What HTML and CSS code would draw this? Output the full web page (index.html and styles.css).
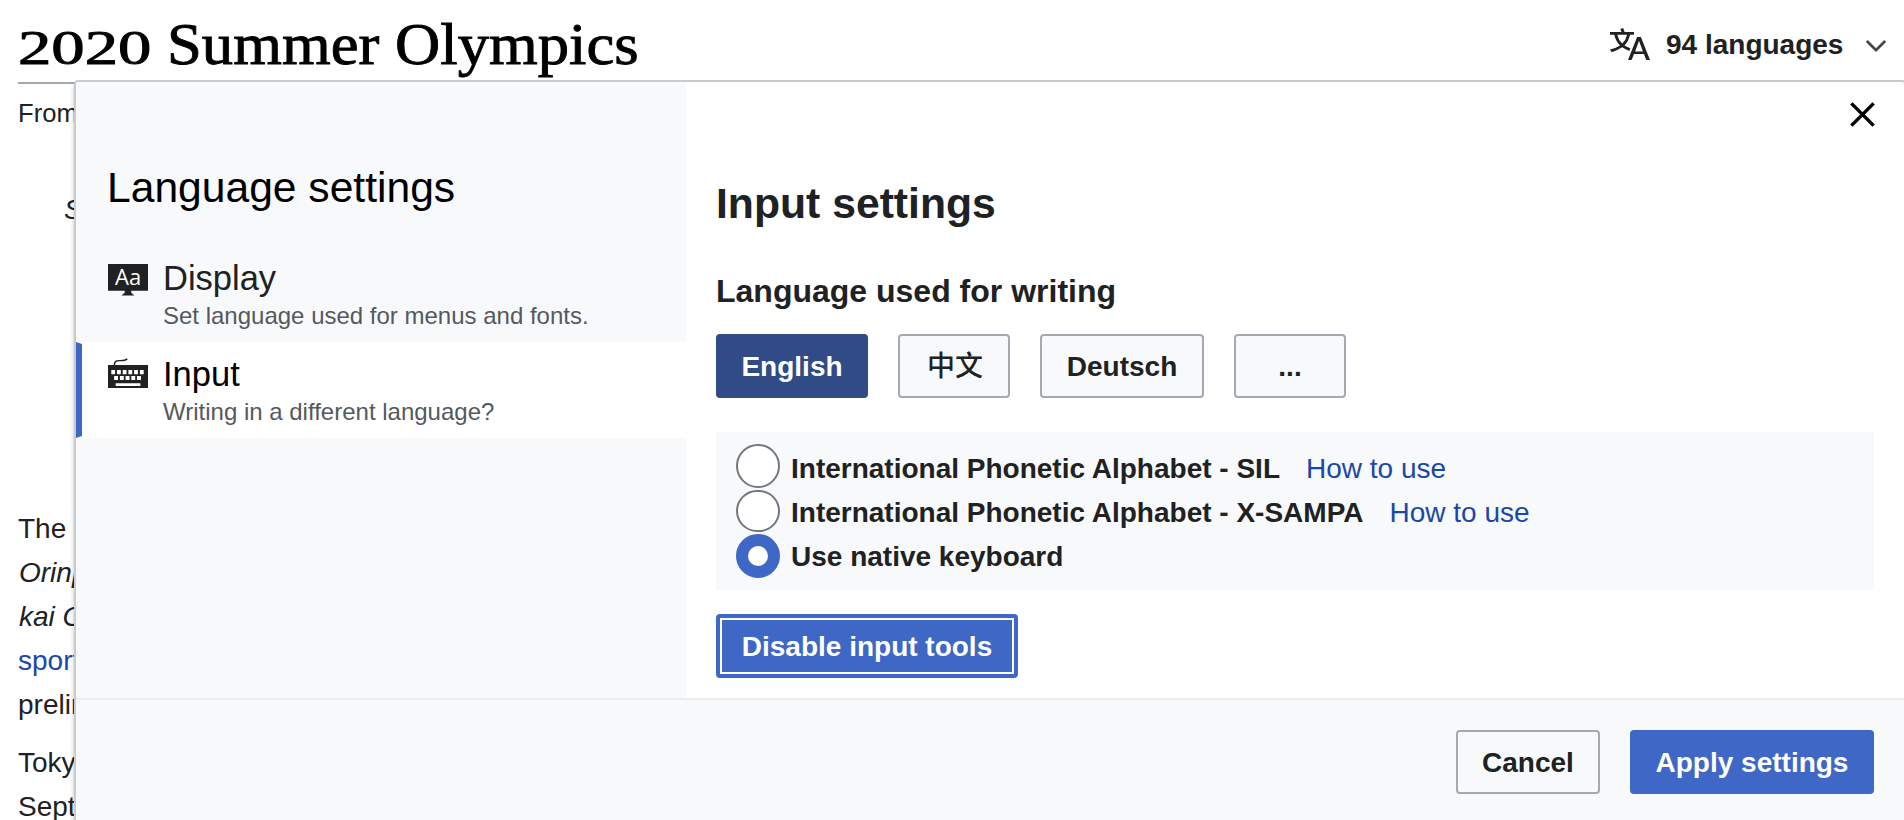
FILE: index.html
```html
<!DOCTYPE html>
<html lang="en">
<head>
<meta charset="utf-8">
<title>2020 Summer Olympics</title>
<link rel="stylesheet" href="styles.css">
</head>
<body>
<header class="page-header">
  <h1 class="page-title"><span class="title-year">2020</span><span class="title-name">Summer Olympics</span></h1>
  <div class="lang-button">
    <svg class="lang-icon" viewBox="0 0 20 20"><path d="M20 18h-1.44a.6.6 0 0 1-.4-.12.8.8 0 0 1-.23-.31L17 15h-5l-1 2.54a.8.8 0 0 1-.22.3.6.6 0 0 1-.4.14H9l4.55-11.47h1.89zm-3.53-4.31L14.89 9.5a12 12 0 0 1-.39-1.24q-.09.37-.19.69l-.19.56-1.58 4.19zm-6.3-1.58a13.4 13.4 0 0 1-2.91-1.41 11.46 11.46 0 0 0 2.81-5.37H12V4H7.31a4 4 0 0 0-.2-.56C6.87 2.79 6.6 2 6.6 2l-1.47.5s.4.89.6 1.5H0v1.33h2.15A11.23 11.23 0 0 0 5 10.7a17.2 17.2 0 0 1-5 2.1q.56.82.87 1.38a23.3 23.3 0 0 0 5.22-2.51 15.6 15.6 0 0 0 3.56 1.77zM3.63 5.33h4.91a8.1 8.1 0 0 1-2.45 4.45 9.1 9.1 0 0 1-2.46-4.45"/></svg>
    <span class="lang-label">94 languages</span>
    <svg class="lang-chevron" viewBox="0 0 20 20"><path d="m17.5 4.75-7.5 7.5-7.5-7.5L1 6.25l9 9 9-9z"/></svg>
  </div>
</header>

<article class="article">
  <div class="tagline">From</div>
  <div class="hatnote">S</div>
  <p class="para lead">The<br><i>Orinp</i><br><i>kai O</i><br><a class="link">sport</a><br>prelim</p>
  <p class="para">Toky<br>Sept</p>
</article>

<section class="dialog">
  <div class="dialog-main">
    <nav class="sidebar">
      <h2 class="sidebar-title">Language settings</h2>
      <div class="menu-item">
        <svg class="menu-icon" viewBox="0 0 40 40">
          <path class="ink" d="M0 6h40v26.700H23.200v2.100l3.200 2.700H13.400l3.300-2.700v-2.100H0z"/>
          <text class="icon-text" x="7" y="26.700">Aa</text>
        </svg>
        <div>
          <div class="menu-name">Display</div>
          <div class="menu-desc">Set language used for menus and fonts.</div>
        </div>
      </div>
      <div class="menu-item active">
        <svg class="menu-icon" viewBox="0 0 40 40">
          <path class="cord" d="M6.300 11.500C6.500 7 8.200 6.600 11 6.600s6 .3 8.300-1.700"/>
          <rect class="ink" y="11" width="40" height="23"/>
          <path class="keys" d="M3.300 16h3.800v4.200h-3.800zM9 16h3.800v4.200h-3.800zM14.700 16h3.800v4.200h-3.800zM20.400 16h3.800v4.200h-3.800zM26.100 16h3.800v4.200h-3.800zM31.900 16h3.800v4.200h-3.800zM6.100 22h3.900v4h-3.900zM11.900 22h3.900v4h-3.900zM17.600 22h3.900v4h-3.900zM23.300 22h3.900v4h-3.900zM29 22h3.900v4h-3.900zM7.700 29.300h24.700v2.700h-24.700z"/>
        </svg>
        <div>
          <div class="menu-name">Input</div>
          <div class="menu-desc">Writing in a different language?</div>
        </div>
      </div>
    </nav>

    <div class="content">
      <svg class="close" viewBox="0 0 20 20"><path d="m4.340 2.930 12.730 12.730-1.410 1.410L2.930 4.340zM17.070 4.340 4.340 17.070l-1.410-1.410L15.660 2.930z"/></svg>
      <h3 class="content-title">Input settings</h3>
      <h4 class="content-subtitle">Language used for writing</h4>
      <div class="lang-choices">
        <button class="btn selected english">English</button>
        <button class="btn short chinese">中文</button>
        <button class="btn deutsch">Deutsch</button>
        <button class="btn short">...</button>
      </div>
      <div class="methods">
        <label class="method"><span class="radio first"></span><span class="method-text">International Phonetic Alphabet - SIL</span><a class="link howto">How to use</a></label>
        <label class="method"><span class="radio second"></span><span class="method-text">International Phonetic Alphabet - X-SAMPA</span><a class="link howto">How to use</a></label>
        <label class="method"><span class="radio checked"></span><span class="method-text">Use native keyboard</span></label>
      </div>
      <button class="btn primary focused">Disable input tools</button>
    </div>
  </div>
  <footer class="dialog-footer">
    <button class="btn cancel">Cancel</button>
    <button class="btn primary apply">Apply settings</button>
  </footer>
</section>
</body>
</html>
```
FILE: styles.css
```css
* { box-sizing: border-box; }
html, body { height: 820px; overflow: hidden; }
body {
  margin: 0;
  position: relative;
  background: #fff;
  color: #202122;
  font: 28px/44px "Liberation Sans", "Noto Sans CJK SC", sans-serif;
}
h1, h2, h3, h4, p { margin: 0; }
svg { display: block; flex: none; }

.page-header {
  display: flex;
  justify-content: space-between;
  align-items: flex-start;
  height: 84px;
  margin-left: 18px;
  padding-right: 17px;
  border-bottom: 2px solid #a2a9b1;
}
.page-title {
  display: flex;
  align-items: baseline;
  padding: 6px 0 0 0;
  color: #000;
  font: 400 59px/77px "Liberation Serif", serif;
  white-space: nowrap;
  -webkit-text-stroke: 0.9px #000;
}
.title-year {
  width: 149px;
  font-size: 48px;
  transform: scaleX(1.39);
  transform-origin: 0 0;
}
.title-name { transform: scaleX(1.062); transform-origin: 0 0; }

.lang-button {
  display: flex;
  align-items: center;
  height: 40px;
  margin-top: 24px;
  font-weight: 700;
  white-space: nowrap;
}
.lang-icon { width: 40px; height: 40px; fill: #202122; }
.lang-label { width: 199px; margin-left: 16px; padding-top: 2px; }
.lang-chevron { width: 22px; height: 22px; fill: #404244; stroke: #404244; stroke-width: 0.4; margin-top: 3px; }

.article { padding-left: 18px; width: 120px; white-space: nowrap; }
.tagline { margin-top: 9px; font-size: 25.6px; line-height: 40px; }
.hatnote { margin: 55px 0 0 46px; font-style: italic; }
.para { margin-top: 14px; }
.para i { padding-left: 1px; }
.para.lead { margin-top: 275px; }
.link { color: #1a47a8; }

.dialog {
  position: absolute;
  left: 74px;
  top: 80px;
  width: 1832px;
  height: 780px;
  border: 2px solid #c8ccd1;
  border-radius: 4px;
  background: #fff;
  box-shadow: 0 4px 4px rgba(0, 0, 0, 0.25);
  overflow: hidden;
}
.dialog-main { display: flex; height: 616px; }

.sidebar { width: 610px; padding-top: 79px; background: #f8f9fb; }
.sidebar-title {
  margin: 0 0 33px 31px;
  color: #000;
  font-size: 42.6px;
  font-weight: 400;
  line-height: 52px;
}
.menu-item {
  display: flex;
  gap: 15px;
  height: 96px;
  padding: 12px 0 0 26px;
  border-left: 6px solid transparent;
}
.menu-item.active {
  padding-top: 10px;
  background: #fff;
  border-top: 2px solid transparent;
  border-bottom: 2px solid transparent;
  border-left-color: #3e67c6;
}
.menu-icon { width: 40px; height: 40px; }
.ink { fill: #202122; }
.cord { fill: none; stroke: #202122; stroke-width: 1.4; }
.keys { fill: #fff; }
.icon-text { fill: #fff; font: 22px "Open Sans", sans-serif; }
.menu-name { font-size: 34.5px; line-height: 40px; }
.active .menu-name { color: #000; }
.menu-desc { margin-top: 2px; color: #54595d; font-size: 24px; line-height: 32px; }

.content { flex: 1; padding: 14.5px 30px 0; }
.close { width: 35px; height: 35px; margin: 0 -5.5px 45.5px auto; }
.content-title { font-size: 42.7px; line-height: 52px; }
.content-subtitle { margin-top: 42px; font-size: 32px; line-height: 40px; }

.lang-choices { display: flex; gap: 30px; margin-top: 23px; }
.btn {
  height: 64px;
  padding: 2px 0 0;
  border: 2px solid #a2a9b1;
  border-radius: 4px;
  background: #f8f9fb;
  color: #202122;
  font: 700 28px/58px "Liberation Sans", "Noto Sans CJK SC", sans-serif;
  text-align: center;
  white-space: nowrap;
}
.english { width: 152px; }
.short { width: 112px; }
.chinese { padding-left: 2px; font-weight: 500; }
.deutsch { width: 164px; }
.cancel { width: 144px; }
.apply { width: 244px; }
.btn.selected { background: #304b86; border-color: #304b86; color: #fff; }
.btn.primary { background: #3e67c6; border-color: #3e67c6; color: #fff; }
.btn.focused {
  display: block;
  width: 302px;
  margin-top: 24px;
  border-width: 4px;
  line-height: 54px;
  box-shadow: inset 0 0 0 2px #fff;
}

.methods {
  height: 158px;
  margin-top: 34px;
  padding: 14px 20px 0;
  background: #f8f9fb;
}
.method { display: flex; height: 44px; font-weight: 700; white-space: nowrap; }
.radio {
  flex: none;
  width: 44px;
  height: 44px;
  margin-right: 11px;
  border: 2px solid #72777d;
  border-radius: 22px;
  background: #fff;
}
.radio.first { margin-top: -2px; }
.radio.second { height: 42px; }
.radio.checked { border: 12px solid #3e67c6; }
.method-text, .howto { padding-top: 1px; }
.howto { margin-left: 26px; font-weight: 400; }

.dialog-footer {
  display: flex;
  justify-content: flex-end;
  gap: 30px;
  height: 160px;
  padding: 30px 30px 0;
  border-top: 2px solid #eaecf0;
  background: #f8f9fb;
}
```
